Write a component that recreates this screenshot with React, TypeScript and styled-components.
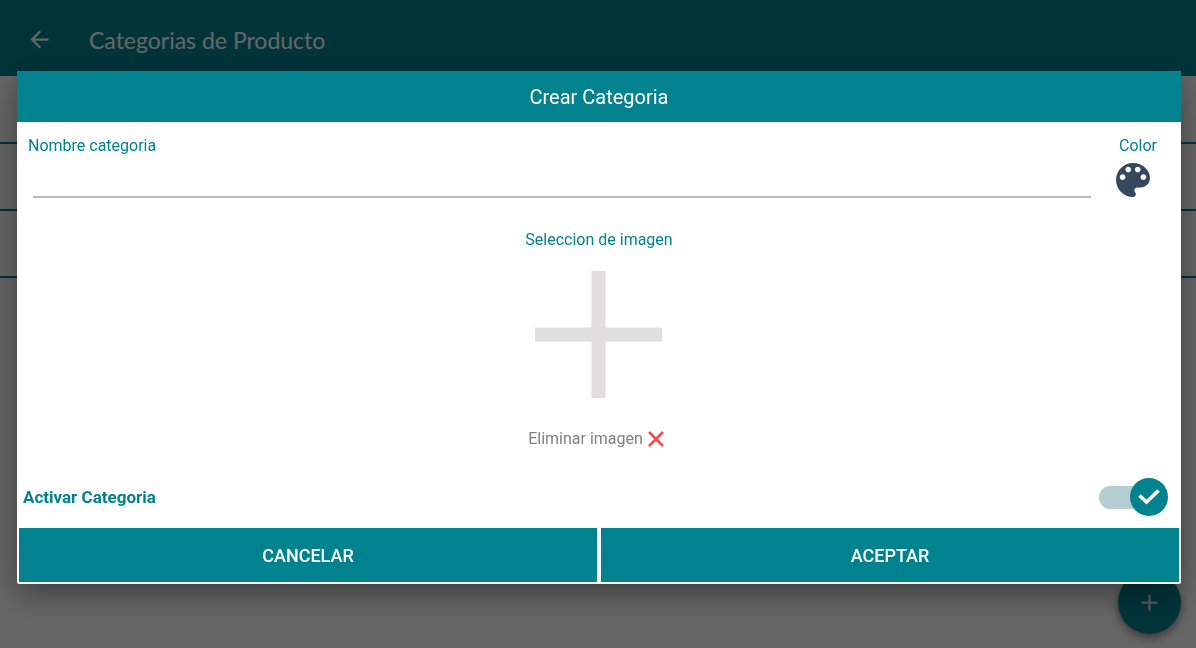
import React, { useState } from "react";
import styled, { createGlobalStyle } from "styled-components";

const teal = "#00838f";

const GlobalStyle = createGlobalStyle`
  * { box-sizing: border-box; }
  body { margin: 0; background: #fff; font-family: Roboto, sans-serif; }
  button { font: inherit; border: 0; padding: 0; background: none; cursor: pointer; }
`;

const Page = styled.div`
  min-height: 100vh;
`;

const Toolbar = styled.header`
  display: flex;
  align-items: center;
  gap: 36px;
  height: 76px;
  padding: 3px 26px 0;
  background: ${teal};
  color: #fff;
`;

const BackButton = styled.button`
  display: flex;
  color: inherit;
`;

const PageTitle = styled.h1`
  margin: 0;
  font: 400 23px/32px Lato, sans-serif;
`;

const CategoryList = styled.ul`
  margin: 0;
  padding: 1px 0 0;
  list-style: none;
`;

const CategoryRow = styled.li`
  height: 67px;
  border-bottom: 2px solid ${teal};
`;

const Fab = styled.button`
  position: fixed;
  right: 15px;
  bottom: 14px;
  display: grid;
  place-items: center;
  width: 63px;
  height: 63px;
  border-radius: 50%;
  background: ${teal};
  color: #e6e6e6;
  box-shadow: 0 4px 10px rgba(0, 0, 0, 0.45);
`;

const Backdrop = styled.div`
  position: fixed;
  inset: 0;
  display: grid;
  align-items: center;
  padding: 7px 15px 0 17px;
  background: rgba(0, 0, 0, 0.6);
`;

const Dialog = styled.section`
  overflow: hidden;
  border-radius: 2px;
  background: #fff;
  color: ${teal};
  box-shadow: 0 10px 32px rgba(0, 0, 0, 0.4);
`;

const DialogTitle = styled.h2`
  margin: 0;
  padding-top: 1px;
  background: ${teal};
  color: #fff;
  text-align: center;
  font-size: 20px;
  font-weight: 400;
  line-height: 50px;
`;

const FieldRow = styled.div`
  display: flex;
  gap: 25px;
  padding: 13px 24px 0 11px;
`;

const NameField = styled.div`
  display: flex;
  flex: 1;
  flex-direction: column;
`;

const Label = styled.label`
  font-size: 16px;
  line-height: 22px;
`;

const NameInput = styled.input`
  height: 41px;
  margin: 0 0 0 5px;
  padding: 0 4px;
  border: 0;
  border-bottom: 2px solid #b9b9b9;
  outline: 0;
  background: transparent;
  color: #333;
  font: 18px Roboto, sans-serif;
`;

const ColorField = styled.div`
  display: flex;
  flex-direction: column;
  gap: 6px;
  width: 41px;
  text-align: right;
`;

const ColorButton = styled.button`
  display: flex;
  color: #34495e;
`;

const ImageSection = styled.div`
  display: flex;
  flex-direction: column;
  align-items: center;
  padding: 31px 0 28px;
`;

const AddImageButton = styled.button`
  display: flex;
  margin: 20px 0 30px;
  color: #e0dedf;
`;

const RemoveImageButton = styled.button`
  display: flex;
  align-items: center;
  gap: 5px;
  padding-right: 6px;
  color: #808080;
  font-size: 16px;
  line-height: 22px;
`;

const ActiveRow = styled.div`
  display: flex;
  align-items: center;
  justify-content: space-between;
  padding: 0 13px 0 6px;
`;

const ActiveLabel = styled.label`
  font-size: 17px;
  font-weight: 700;
  line-height: 24px;
`;

const Switch = styled.span`
  position: relative;
  display: flex;
  align-items: center;
  width: 69px;
  height: 38px;
`;

const SwitchInput = styled.input`
  appearance: none;
  width: 62px;
  height: 23px;
  margin: 0;
  border-radius: 12px;
  background: #b3cdd1;
  cursor: pointer;
`;

const SwitchThumb = styled.span<{ $on: boolean }>`
  position: absolute;
  top: 0;
  left: ${({ $on }) => ($on ? "auto" : "0")};
  right: ${({ $on }) => ($on ? "0" : "auto")};
  display: grid;
  place-items: center;
  width: 38px;
  height: 38px;
  border-radius: 50%;
  background: ${({ $on }) => ($on ? teal : "#9e9e9e")};
  color: #fff;
  pointer-events: none;
`;

const Actions = styled.div`
  display: grid;
  grid-template-columns: 1fr 1fr;
  gap: 4px;
  padding: 12px 2px 2px;
`;

const ActionButton = styled.button`
  height: 54px;
  background: ${teal};
  color: #fff;
  font-size: 18px;
  font-weight: 500;
`;

export default function App() {
  const [active, setActive] = useState(true);
  return (
    <>
      <GlobalStyle />
      <Page>
        <Toolbar>
          <BackButton aria-label="Volver">
            <svg width="27" height="27" viewBox="0 0 24 24" fill="currentColor">
              <path d="M20 11H7.83l5.59-5.59L12 4l-8 8 8 8 1.41-1.41L7.83 13H20v-2z" />
            </svg>
          </BackButton>
          <PageTitle>Categorias de Producto</PageTitle>
        </Toolbar>
        <CategoryList>
          <CategoryRow />
          <CategoryRow />
          <CategoryRow />
        </CategoryList>
        <Fab aria-label="Agregar">
          <svg width="27" height="27" viewBox="0 0 24 24" fill="currentColor">
            <path d="M19 13h-6v6h-2v-6H5v-2h6V5h2v6h6v2z" />
          </svg>
        </Fab>
      </Page>
      <Backdrop>
        <Dialog role="dialog" aria-modal="true" aria-labelledby="dialog-title">
          <DialogTitle id="dialog-title">Crear Categoria</DialogTitle>
          <FieldRow>
            <NameField>
              <Label htmlFor="name">Nombre categoria</Label>
              <NameInput id="name" type="text" />
            </NameField>
            <ColorField>
              <Label htmlFor="color">Color</Label>
              <ColorButton id="color" type="button">
                <svg width="34" height="34" viewBox="3 3 18 18" fill="currentColor">
                  <path d="M12 3c-4.97 0-9 4.03-9 9s4.03 9 9 9c.83 0 1.5-.67 1.5-1.5 0-.39-.15-.74-.39-1.01-.23-.26-.38-.61-.38-.99 0-.83.67-1.5 1.5-1.5H16c2.76 0 5-2.24 5-5 0-4.42-4.03-8-9-8zm-5.5 9c-.83 0-1.5-.67-1.5-1.5S5.67 9 6.5 9 8 9.67 8 10.5 7.33 12 6.5 12zm3-4C8.67 8 8 7.33 8 6.5S8.67 5 9.5 5s1.5.67 1.5 1.5S10.33 8 9.5 8zm5 0c-.83 0-1.5-.67-1.5-1.5S13.67 5 14.5 5s1.5.67 1.5 1.5S15.33 8 14.5 8zm3 4c-.83 0-1.5-.67-1.5-1.5S16.67 9 17.5 9s1.5.67 1.5 1.5-.67 1.5-1.5 1.5z" />
                </svg>
              </ColorButton>
            </ColorField>
          </FieldRow>
          <ImageSection>
            <Label htmlFor="image">Seleccion de imagen</Label>
            <AddImageButton id="image" type="button">
              <svg width="128" height="127" viewBox="0 0 128 127" fill="currentColor">
                <path d="M56.5 0h14v56.5H127v14H70.5V127h-14V70.5H0v-14h56.5z" />
              </svg>
            </AddImageButton>
            <RemoveImageButton type="button">
              Eliminar imagen
              <svg width="16" height="16" viewBox="0 0 16 16" stroke="#f8484a" strokeWidth="2.5">
                <path d="M1 1l14 14M15 1L1 15" />
              </svg>
            </RemoveImageButton>
          </ImageSection>
          <ActiveRow>
            <ActiveLabel htmlFor="active">Activar Categoria</ActiveLabel>
            <Switch>
              <SwitchInput
                id="active"
                type="checkbox"
                role="switch"
                checked={active}
                onChange={(e) => setActive(e.target.checked)}
              />
              <SwitchThumb $on={active}>
                {active && (
                  <svg width="22" height="16" viewBox="0 0 22 16" fill="none" stroke="currentColor" strokeWidth="3.6">
                    <path d="M1.5 6.5l7 6.500L20.5 1.500" />
                  </svg>
                )}
              </SwitchThumb>
            </Switch>
          </ActiveRow>
          <Actions>
            <ActionButton type="button">CANCELAR</ActionButton>
            <ActionButton type="button">ACEPTAR</ActionButton>
          </Actions>
        </Dialog>
      </Backdrop>
    </>
  );
}
